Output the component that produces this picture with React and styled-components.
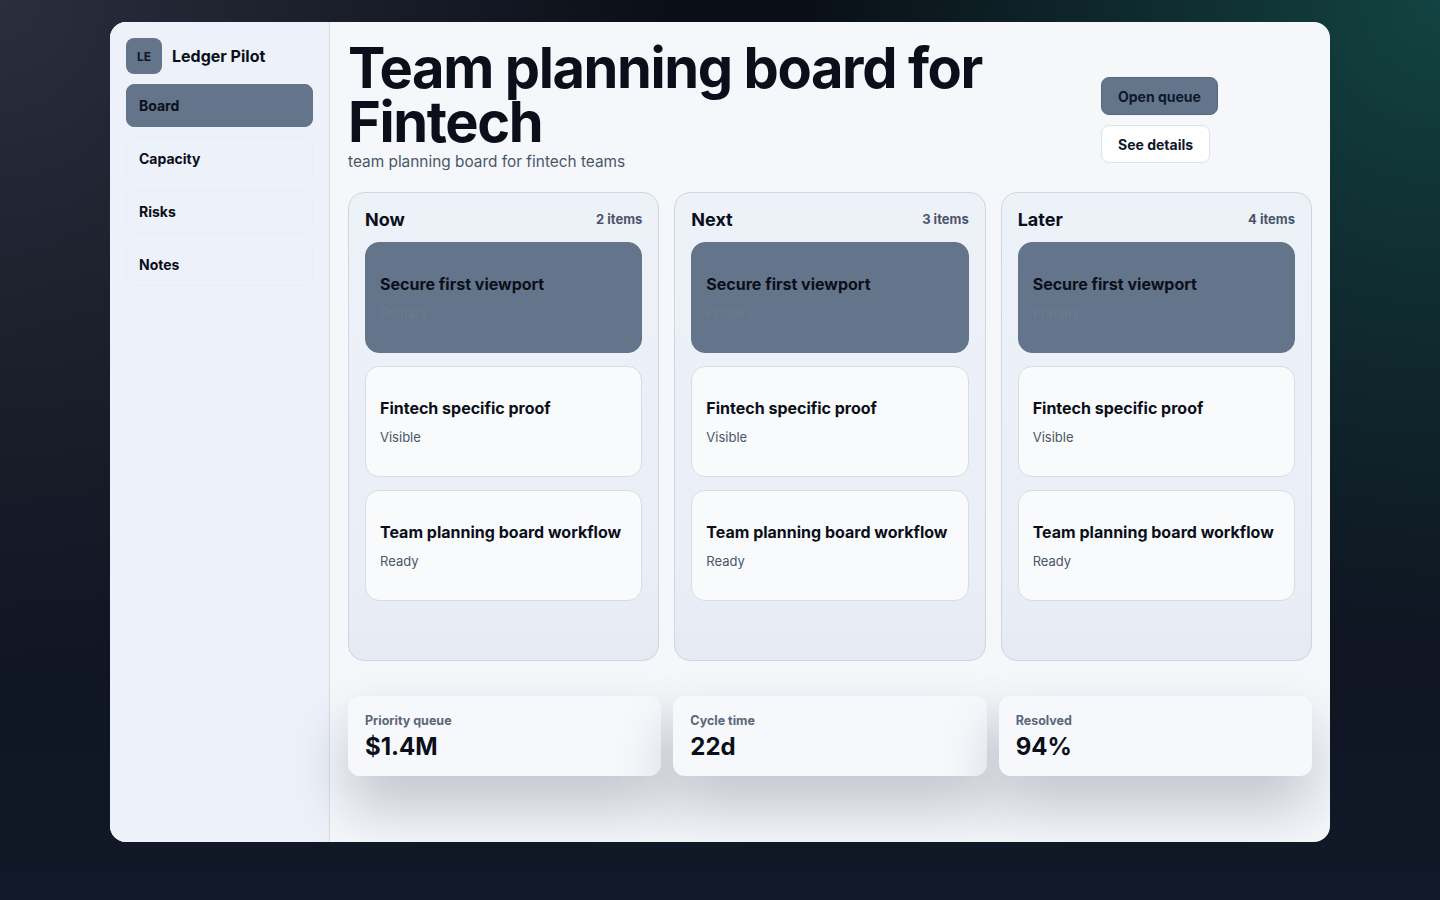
import React from 'react';
import styled, { createGlobalStyle } from 'styled-components';

const GlobalStyle = createGlobalStyle`
  * {
    box-sizing: border-box;
  }
  html, body {
    margin: 0;
    padding: 0;
  }
  body {
    min-height: 900px;
    font-family: Inter, "Noto Sans", "Liberation Sans", sans-serif;
    color: #0b0f19;
    background:
      radial-gradient(circle at 100% 0%, rgba(19, 70, 68, 0.95), rgba(19, 70, 68, 0) 38%),
      radial-gradient(circle at 0% 0%, rgba(45, 50, 66, 0.9), rgba(45, 50, 66, 0) 40%),
      linear-gradient(180deg, #0a0e16 0%, #111827 100%);
  }
`;

const Page = styled.div`
  padding: 22px 110px 58px;
`;

const Frame = styled.div`
  display: flex;
  height: 820px;
  border-radius: 16px;
  overflow: hidden;
  background: #f5f7fb;
`;

const Sidebar = styled.aside`
  width: 220px;
  flex-shrink: 0;
  padding: 16px;
  background: #edf1f9;
  border-right: 1px solid #d6dbe3;
  display: flex;
  flex-direction: column;
  gap: 10px;
`;

const Brand = styled.div`
  display: flex;
  align-items: center;
  gap: 10px;
  height: 36px;
`;

const Avatar = styled.div`
  width: 36px;
  height: 36px;
  border-radius: 8px;
  background: #64748b;
  display: flex;
  align-items: center;
  justify-content: center;
  font-size: 12px;
  font-weight: 700;
  color: #0f172a;
`;

const BrandName = styled.div`
  font-size: 16px;
  font-weight: 700;
  color: #0b0f19;
`;

const Nav = styled.nav`
  display: flex;
  flex-direction: column;
  gap: 10px;
`;

const NavItem = styled.div`
  height: 43px;
  display: flex;
  align-items: center;
  padding: 0 12px;
  border-radius: 8px;
  font-size: 14px;
  font-weight: 700;
  color: #0b0f19;
  border: 1px solid ${(p) => (p.$active ? '#64748b' : 'rgba(226, 232, 240, 0.35)')};
  background: ${(p) => (p.$active ? '#64748b' : 'transparent')};
`;

const Main = styled.main`
  flex: 1;
  min-width: 0;
  padding: 19px 18px 0;
  display: flex;
  flex-direction: column;
`;

const Header = styled.header`
  display: flex;
  align-items: flex-start;
  gap: 24px;
`;

const TitleBlock = styled.div`
  flex: 1;
  min-width: 0;
`;

const Title = styled.h1`
  margin: 0;
  font-size: 56px;
  line-height: 54px;
  font-weight: 700;
  letter-spacing: -0.025em;
  color: #0b0f19;
`;

const Subtitle = styled.p`
  margin: 1px 0 0;
  font-size: 15.4px;
  line-height: 24px;
  color: #4b5668;
`;

const Actions = styled.div`
  width: 211px;
  flex-shrink: 0;
  margin-top: 36px;
  display: flex;
  flex-direction: column;
  align-items: flex-start;
  gap: 10px;
`;

const Button = styled.button`
  height: 38px;
  padding: 0 16px;
  border-radius: 8px;
  font-family: inherit;
  font-size: 14px;
  font-weight: 700;
  color: #0f172a;
  cursor: pointer;
  border: 1px solid ${(p) => (p.$primary ? '#58677c' : '#dde2e9')};
  background: ${(p) => (p.$primary ? '#64748b' : '#ffffff')};
`;

const Board = styled.section`
  margin-top: 18px;
  display: grid;
  grid-template-columns: repeat(3, 1fr);
  gap: 15px;
`;

const Column = styled.div`
  min-height: 469px;
  padding: 16px;
  border: 1px solid #cfd6df;
  border-radius: 16px;
  background: linear-gradient(180deg, #edf1f8 0%, #eaeef6 80%, #e6eaf2 100%);
  display: flex;
  flex-direction: column;
  gap: 13px;
`;

const ColumnHead = styled.div`
  display: flex;
  align-items: center;
  justify-content: space-between;
  height: 20px;
`;

const ColumnTitle = styled.h2`
  margin: 0;
  font-size: 18px;
  font-weight: 700;
  color: #0b0f19;
`;

const Count = styled.span`
  font-size: 13px;
  font-weight: 700;
  color: #4b5668;
`;

const Card = styled.div`
  min-height: 111px;
  padding: 0 14px;
  border-radius: 14px;
  border: 1px solid ${(p) => (p.$primary ? '#64748b' : '#d8dde5')};
  background: ${(p) => (p.$primary ? '#64748b' : '#f8fafc')};
  display: flex;
  flex-direction: column;
  justify-content: center;
  gap: 9px;
`;

const CardTitle = styled.div`
  font-size: 16px;
  line-height: 22px;
  font-weight: 700;
  color: #0b0f19;
`;

const CardMeta = styled.div`
  font-size: 13px;
  line-height: 18px;
  color: ${(p) => (p.$primary ? '#6d7a8d' : '#4b5668')};
`;

const Stats = styled.section`
  margin-top: 35px;
  display: grid;
  grid-template-columns: repeat(3, 1fr);
  gap: 12px;
`;

const Stat = styled.div`
  height: 80px;
  padding: 17px 17px;
  border-radius: 12px;
  background: #f6f8fc;
  box-shadow: 0 30px 60px rgba(15, 23, 42, 0.23);
`;

const StatLabel = styled.div`
  font-size: 12.5px;
  line-height: 16px;
  font-weight: 700;
  color: #5b6679;
`;

const StatValue = styled.div`
  margin-top: 3px;
  font-size: 24px;
  line-height: 30px;
  font-weight: 700;
  color: #0b0f19;
`;

const navItems = ['Board', 'Capacity', 'Risks', 'Notes'];

const columns = [
  { name: 'Now', count: '2 items' },
  { name: 'Next', count: '3 items' },
  { name: 'Later', count: '4 items' },
];

const cards = [
  { title: 'Secure first viewport', meta: 'Primary', primary: true },
  { title: 'Fintech specific proof', meta: 'Visible' },
  { title: 'Team planning board workflow', meta: 'Ready' },
];

const stats = [
  { label: 'Priority queue', value: '$1.4M' },
  { label: 'Cycle time', value: '22d' },
  { label: 'Resolved', value: '94%' },
];

export default function App() {
  return (
    <Page>
      <GlobalStyle />
      <Frame>
        <Sidebar>
          <Brand>
            <Avatar>LE</Avatar>
            <BrandName>Ledger Pilot</BrandName>
          </Brand>
          <Nav>
            {navItems.map((item) => (
              <NavItem key={item} $active={item === 'Board'}>
                {item}
              </NavItem>
            ))}
          </Nav>
        </Sidebar>
        <Main>
          <Header>
            <TitleBlock>
              <Title>Team planning board for Fintech</Title>
              <Subtitle>team planning board for fintech teams</Subtitle>
            </TitleBlock>
            <Actions>
              <Button $primary>Open queue</Button>
              <Button>See details</Button>
            </Actions>
          </Header>
          <Board>
            {columns.map((col) => (
              <Column key={col.name}>
                <ColumnHead>
                  <ColumnTitle>{col.name}</ColumnTitle>
                  <Count>{col.count}</Count>
                </ColumnHead>
                {cards.map((card) => (
                  <Card key={card.title} $primary={card.primary}>
                    <CardTitle>{card.title}</CardTitle>
                    <CardMeta $primary={card.primary}>{card.meta}</CardMeta>
                  </Card>
                ))}
              </Column>
            ))}
          </Board>
          <Stats>
            {stats.map((s) => (
              <Stat key={s.label}>
                <StatLabel>{s.label}</StatLabel>
                <StatValue>{s.value}</StatValue>
              </Stat>
            ))}
          </Stats>
        </Main>
      </Frame>
    </Page>
  );
}
